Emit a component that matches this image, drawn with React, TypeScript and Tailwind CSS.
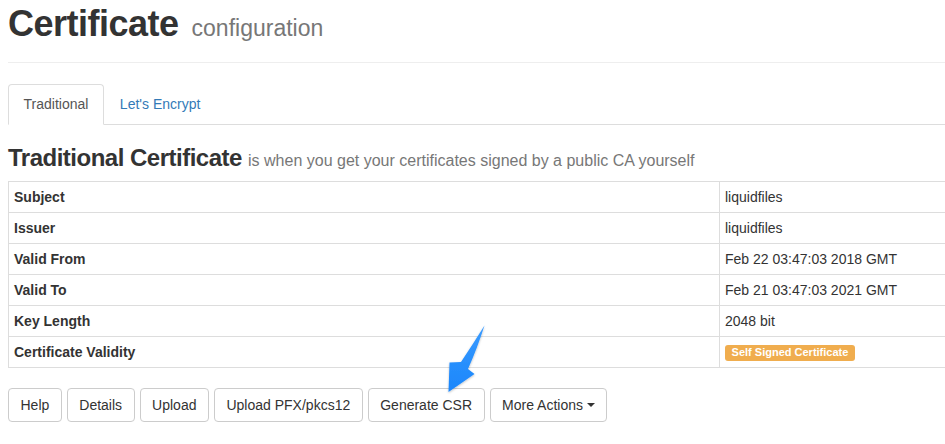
import React from 'react';

const rows: { label: string; value: string; badge?: boolean }[] = [
  { label: 'Subject', value: 'liquidfiles' },
  { label: 'Issuer', value: 'liquidfiles' },
  { label: 'Valid From', value: 'Feb 22 03:47:03 2018 GMT' },
  { label: 'Valid To', value: 'Feb 21 03:47:03 2021 GMT' },
  { label: 'Key Length', value: '2048 bit' },
  { label: 'Certificate Validity', value: 'Self Signed Certificate', badge: true },
];

const buttons = ['Help', 'Details', 'Upload', 'Upload PFX/pkcs12', 'Generate CSR'];

const Arrow: React.FC = () => (
  <svg className="absolute left-0 top-0 pointer-events-none" width="945" height="444" viewBox="0 0 945 444">
    <defs>
      <linearGradient id="arrowFill" x1="0" y1="0" x2="0" y2="1">
        <stop offset="0" stopColor="#3a9bff" />
        <stop offset="1" stopColor="#1a86fb" />
      </linearGradient>
      <filter id="arrowShadow" x="-30%" y="-30%" width="160%" height="160%">
        <feDropShadow dx="0" dy="1" stdDeviation="1" floodColor="#000" floodOpacity="0.25" />
      </filter>
    </defs>
    <path
      d="M484.5,325.5 Q477,349 468,369 L474.5,374 L448.5,392 L449.5,362.5 L461,362 Q473,344 484.5,325.5 Z"
      fill="url(#arrowFill)"
      filter="url(#arrowShadow)"
    />
  </svg>
);

const App: React.FC = () => {
  return (
    <div className="relative w-[945px] h-[444px] overflow-hidden bg-white font-['Liberation_Sans',Arial,sans-serif] text-[14px] text-[#333]">
      <div className="pl-2">
        {/* page header */}
        <div className="h-[63px] border-b border-[#eee] pt-[4px]">
          <h1 className="flex items-baseline leading-[40px]">
            <span className="text-[36px] font-bold tracking-[-0.5px] text-[#333]">Certificate</span>
            <span className="ml-[13px] text-[23px] text-[#777]">configuration</span>
          </h1>
        </div>

        {/* tabs */}
        <div className="mt-[21px] flex border-b border-[#ddd]">
          <div className="-mb-px h-[41px] px-[14.5px] flex items-center border border-[#ddd] border-b-white bg-white rounded-t-[4px] text-[#555]">
            Traditional
          </div>
          <div className="-mb-px h-[41px] px-[15px] flex items-center border border-transparent text-[#337ab7]">
            Let's Encrypt
          </div>
        </div>

        {/* section heading */}
        <h2 className="mt-[20px] mb-[10px] leading-[26px] text-[24px] font-bold tracking-[-0.5px] text-[#333]">
          Traditional Certificate{' '}
          <span className="text-[16px] font-normal tracking-normal leading-none text-[#777]">
            is when you get your certificates signed by a public CA yourself
          </span>
        </h2>

        {/* details table */}
        <table className="w-[950px] table-fixed border-collapse">
          <colgroup>
            <col className="w-[711px]" />
            <col />
          </colgroup>
          <tbody>
            {rows.map((r) => (
              <tr key={r.label}>
                <td className="border border-[#ddd] px-[5px] py-[5px] leading-[20px] font-bold">{r.label}</td>
                <td className="border border-[#ddd] px-[5px] py-[5px] leading-[20px]">
                  {r.badge ? (
                    <span className="inline-block rounded-[3px] bg-[#f0ad4e] px-[6.6px] pt-[2.2px] pb-[3.3px] text-[11px] font-bold leading-none text-white align-[1px]">
                      {r.value}
                    </span>
                  ) : (
                    r.value
                  )}
                </td>
              </tr>
            ))}
          </tbody>
        </table>

        {/* actions */}
        <div className="mt-[20px] flex gap-[5px]">
          {buttons.map((b) => (
            <button
              key={b}
              className="h-[34px] px-[11.5px] border border-[#ccc] rounded-[4px] bg-white text-[14px] text-[#333] leading-[20px]"
            >
              {b}
            </button>
          ))}
          <button className="h-[34px] px-[11.5px] border border-[#ccc] rounded-[4px] bg-white text-[14px] text-[#333] leading-[20px] flex items-center">
            More Actions
            <span className="ml-[4px] inline-block w-0 h-0 border-t-[4px] border-t-[#333] border-x-[4px] border-x-transparent" />
          </button>
        </div>
      </div>
      <Arrow />
    </div>
  );
};

export default App;
